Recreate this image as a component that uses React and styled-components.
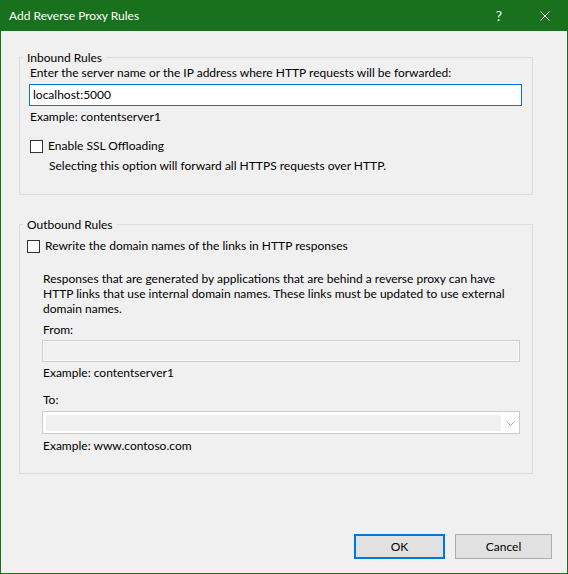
import React from "react";
import styled, { createGlobalStyle } from "styled-components";

const GlobalStyle = createGlobalStyle`
    html, body {
        margin: 0;
        padding: 0;
        background: #f0f0f0;
    }
    * {
        box-sizing: border-box;
    }
`;

const Window = styled.div`
    width: 568px;
    height: 574px;
    display: flex;
    flex-direction: column;
    background: #f0f0f0;
    border: 1px solid #19711d;
    border-top: 0;
    font-family: Lato, "Noto Sans", sans-serif;
    font-size: 12px;
    color: #000;
`;

const TitleBar = styled.div`
    flex: none;
    height: 31px;
    display: flex;
    align-items: center;
    background: #19711d;
    color: #fff;
    margin: 0 -1px;
`;

const Title = styled.div`
    flex: 1;
    padding-left: 9px;
    line-height: 16px;
    white-space: nowrap;
`;

const CaptionButton = styled.div`
    width: 46px;
    height: 31px;
    display: flex;
    align-items: center;
    justify-content: center;
    font-size: 14px;
    line-height: 16px;
`;

const Body = styled.div`
    flex: 1;
    display: flex;
    flex-direction: column;
    padding: 19px 15px 14px 18px;
`;

const Group = styled.fieldset`
    margin: ${(p) => p.$top || 0}px 19px 0 0;
    padding: 0;
    min-width: 0;
    border: 1px solid #dcdcdc;
`;

const Legend = styled.legend`
    margin-left: 3px;
    padding: 0 4px;
    line-height: 15px;
`;

const GroupBody = styled.div`
    display: flex;
    flex-direction: column;
    padding: ${(p) => p.$pad};
`;

const Text = styled.div`
    margin-top: ${(p) => p.$top || 0}px;
    padding-left: ${(p) => p.$indent || 1}px;
    line-height: ${(p) => p.$lh || 16}px;
    white-space: ${(p) => (p.$wrap ? "normal" : "nowrap")};
`;

const TextBox = styled.div`
    margin-top: ${(p) => p.$top || 0}px;
    height: 22px;
    display: flex;
    align-items: center;
    padding-left: 3px;
    background: ${(p) => (p.$disabled ? "#f0f0f0" : "#fff")};
    border: 1px solid ${(p) => (p.$disabled ? "#cccccc" : "#0078d7")};
    box-shadow: ${(p) => (p.$disabled ? "inset 0 0 0 1px #f9f9f9" : "none")};
    line-height: 16px;
`;

const Combo = styled.div`
    margin-top: ${(p) => p.$top || 0}px;
    height: 23px;
    display: flex;
    align-items: stretch;
    padding: 3px 0 2px 3px;
    background: #fff;
    border: 1px solid #cccccc;
`;

const ComboEdit = styled.div`
    flex: 1;
    background: #f0f0f0;
`;

const ComboArrow = styled.div`
    width: 18px;
    display: flex;
    align-items: center;
    justify-content: center;
`;

const CheckRow = styled.label`
    margin-top: ${(p) => p.$top || 0}px;
    padding-left: ${(p) => p.$indent || 0}px;
    height: 16px;
    display: flex;
    align-items: center;
    gap: 5px;
    line-height: 16px;
    white-space: nowrap;
`;

const CheckBox = styled.span`
    flex: none;
    width: 13px;
    height: 13px;
    background: #fff;
    border: 1px solid #333;
`;

const Indent = styled.div`
    display: flex;
    flex-direction: column;
    padding-left: 15px;
`;

const Footer = styled.div`
    margin-top: auto;
    display: flex;
    justify-content: flex-end;
    gap: 10px;
`;

const Button = styled.div`
    width: ${(p) => p.$w}px;
    height: 25px;
    display: flex;
    align-items: center;
    justify-content: center;
    background: #e1e1e1;
    border: ${(p) => (p.$default ? "2px solid #0078d7" : "1px solid #adadad")};
    line-height: 16px;
`;

function CloseIcon() {
    return (
        <svg width="10" height="10" viewBox="0 0 10 10">
            <path d="M0.5 0.5 L9.5 9.5 M9.5 0.5 L0.5 9.5" stroke="#fff" strokeWidth="1" fill="none" />
        </svg>
    );
}

function Chevron() {
    return (
        <svg width="9" height="5" viewBox="0 0 9 5">
            <polyline points="0.5,0.5 4.5,4.5 8.5,0.5" stroke="#a6a6a6" strokeWidth="1" fill="none" />
        </svg>
    );
}

export default function App() {
    return (
        <>
            <GlobalStyle />
            <Window>
                <TitleBar>
                    <Title>Add Reverse Proxy Rules</Title>
                    <CaptionButton>?</CaptionButton>
                    <CaptionButton>
                        <CloseIcon />
                    </CaptionButton>
                </TitleBar>
                <Body>
                    <Group>
                        <Legend>Inbound Rules</Legend>
                        <GroupBody $pad="0 10px 20px 9px">
                            <Text>
                                Enter the server name or the IP address where HTTP requests will be forwarded:
                            </Text>
                            <TextBox $top={3}>localhost:5000</TextBox>
                            <Text $top={3}>Example: contentserver1</Text>
                            <CheckRow $top={13} $indent={1}>
                                <CheckBox />
                                Enable SSL Offloading
                            </CheckRow>
                            <Text $top={4} $indent={20}>
                                Selecting this option will forward all HTTPS requests over HTTP.
                            </Text>
                        </GroupBody>
                    </Group>
                    <Group $top={22}>
                        <Legend>Outbound Rules</Legend>
                        <GroupBody $pad="0 12px 19px 7px">
                            <CheckRow $top={6}>
                                <CheckBox />
                                Rewrite the domain names of the links in HTTP responses
                            </CheckRow>
                            <Indent>
                                <Text $top={17} $lh={15} $wrap>
                                    Responses that are generated by applications that are behind a reverse proxy can
                                    have HTTP links that use internal domain names. These links must be updated to
                                    use external domain names.
                                </Text>
                                <Text $top={6}>From:</Text>
                                <TextBox $top={2} $disabled />
                                <Text $top={3}>Example: contentserver1</Text>
                                <Text $top={11}>To:</Text>
                                <Combo $top={3}>
                                    <ComboEdit />
                                    <ComboArrow>
                                        <Chevron />
                                    </ComboArrow>
                                </Combo>
                                <Text $top={4}>Example: www.contoso.com</Text>
                            </Indent>
                        </GroupBody>
                    </Group>
                    <Footer>
                        <Button $w={91} $default>
                            OK
                        </Button>
                        <Button $w={97}>Cancel</Button>
                    </Footer>
                </Body>
            </Window>
        </>
    );
}
